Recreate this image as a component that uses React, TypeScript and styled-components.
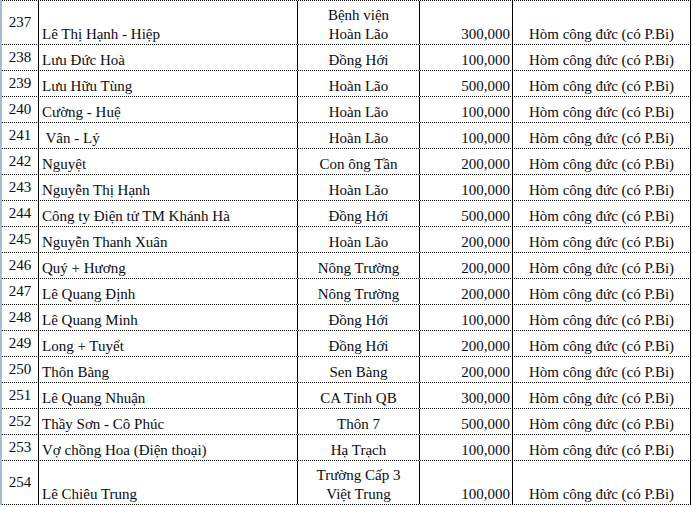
import React from "react";
import styled, { createGlobalStyle } from "styled-components";

const Global = createGlobalStyle`
  html, body { margin: 0; padding: 0; background: #ffffff; }
  body { font-family: "Liberation Serif", "Times New Roman", serif; }
`;

const Page = styled.div`
  display: flex;
  align-items: stretch;
  width: 693px;
  height: 507px;
  overflow: hidden;
`;

const Strip = styled.div`
  width: 2px;
  height: 505px;
  background: #a9bbd0;
  flex: none;
`;

const Sheet = styled.div`
  display: flex;
  flex-direction: column;
  border-top: 1px dotted #000;
  align-self: flex-start;
`;

const Row = styled.div<{ $tall?: boolean }>`
  display: grid;
  grid-template-columns: 37px 259px 122px 93px 178px;
  height: ${(p) => (p.$tall ? 44 : 26)}px;
  box-sizing: border-box;
  border-bottom: 1px dotted #000;
`;

const Cell = styled.div<{ $align: "left" | "center" | "right"; $valign?: "center" | "end" }>`
  box-sizing: border-box;
  border-right: 1px solid #000;
  display: flex;
  flex-direction: column;
  justify-content: ${(p) => (p.$valign === "center" ? "center" : "flex-end")};
  align-items: ${(p) =>
    p.$align === "left" ? "flex-start" : p.$align === "right" ? "flex-end" : "center"};
  text-align: ${(p) => p.$align};
  padding: 0 ${(p) => (p.$align === "right" ? 2 : 0)}px 0 ${(p) => (p.$align === "left" ? 3 : 0)}px;
  font-size: 15px;
  line-height: 19px;
  color: #0b0b14;
  white-space: pre;
  overflow: hidden;
`;

const Line = styled.span`
  display: block;
`;

type Entry = { no: number; name: string; place: string[]; amount: string };

const rows: Entry[] = [
  { no: 237, name: "Lê Thị Hạnh - Hiệp", place: ["Bệnh viện", "Hoàn Lão"], amount: "300,000" },
  { no: 238, name: "Lưu Đức Hoà", place: ["Đồng Hới"], amount: "100,000" },
  { no: 239, name: "Lưu Hữu Tùng", place: ["Hoàn Lão"], amount: "500,000" },
  { no: 240, name: "Cường - Huệ", place: ["Hoàn Lão"], amount: "100,000" },
  { no: 241, name: " Vân - Lý", place: ["Hoàn Lão"], amount: "100,000" },
  { no: 242, name: "Nguyệt", place: ["Con ông Tần"], amount: "200,000" },
  { no: 243, name: "Nguyễn Thị Hạnh", place: ["Hoàn Lão"], amount: "100,000" },
  { no: 244, name: "Công ty Điện tử TM Khánh Hà", place: ["Đồng Hới"], amount: "500,000" },
  { no: 245, name: "Nguyễn Thanh Xuân", place: ["Hoàn Lão"], amount: "200,000" },
  { no: 246, name: "Quý + Hương", place: ["Nông Trường"], amount: "200,000" },
  { no: 247, name: "Lê Quang Định", place: ["Nông Trường"], amount: "200,000" },
  { no: 248, name: "Lê Quang Minh", place: ["Đồng Hới"], amount: "100,000" },
  { no: 249, name: "Long + Tuyết", place: ["Đồng Hới"], amount: "200,000" },
  { no: 250, name: "Thôn Bàng", place: ["Sen Bàng"], amount: "200,000" },
  { no: 251, name: "Lê Quang Nhuận", place: ["CA Tỉnh QB"], amount: "300,000" },
  { no: 252, name: "Thầy Sơn - Cô Phúc", place: ["Thôn 7"], amount: "500,000" },
  { no: 253, name: "Vợ chồng Hoa (Điện thoại)", place: ["Hạ Trạch"], amount: "100,000" },
  { no: 254, name: "Lê Chiêu Trung", place: ["Trường Cấp 3", "Việt Trung"], amount: "100,000" },
];

export default function App() {
  return (
    <>
      <Global />
      <Page>
        <Strip />
        <Sheet>
          {rows.map((r) => (
            <Row key={r.no} $tall={r.place.length > 1}>
              <Cell $align="center" $valign="center">{r.no}</Cell>
              <Cell $align="left">{r.name}</Cell>
              <Cell $align="center">
                {r.place.map((p) => (
                  <Line key={p}>{p}</Line>
                ))}
              </Cell>
              <Cell $align="right">{r.amount}</Cell>
              <Cell $align="center">Hòm công đức (có P.Bi)</Cell>
            </Row>
          ))}
        </Sheet>
      </Page>
    </>
  );
}
